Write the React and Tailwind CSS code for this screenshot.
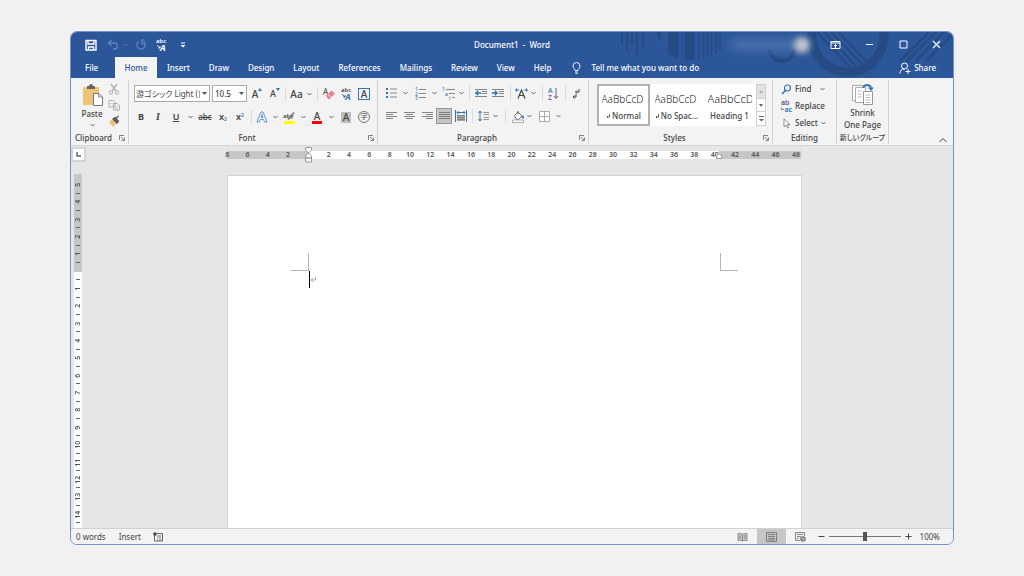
import React, { useState } from 'react';
import clsx from 'clsx';

const tabs = ['Insert', 'Draw', 'Design', 'Layout', 'References', 'Mailings', 'Review', 'View', 'Help'];

const rulerMarks = [8, 6, 4, 2, '', 2, 4, 6, 8, 10, 12, 14, 16, 18, 20, 22, 24, 26, 28, 30, 32, 34, 36, 38, 40, 42, 44, 46, 48];

const sideMarks = [5, 4, 3, 2, 1, '', 1, 2, 3, 4, 5, 6, 7, 8, 9, 10, 11, 12, 13, 14];

const Icon = ({ w = 12, h = 12, className, children }) => (
  <svg
    width={w}
    height={h}
    viewBox={`0 0 ${w} ${h}`}
    fill="none"
    stroke="currentColor"
    className={clsx('shrink-0 overflow-visible', className)}
    aria-hidden="true"
  >
    {children}
  </svg>
);

const Chevron = ({ className }) => (
  <Icon w={5} h={4} className={className}>
    <path d="M.5 1l2 2 2-2" opacity=".8" />
  </Icon>
);

const Tool = ({ label, className, children }) => (
  <button type="button" aria-label={label} className={clsx('flex h-4 shrink-0 items-center justify-center', className)}>
    {children}
  </button>
);

const Sep = ({ className = 'w-1' }) => (
  <div className={clsx('flex shrink-0 justify-center', className)}>
    <div className="h-[14px] w-px bg-[#dcdcdc]" />
  </div>
);

const Launcher = ({ label }) => (
  <button type="button" aria-label={label} className="text-[#666]">
    <Icon w={6} h={6}>
      <path d="M.5 5V.5H5M2 2l3 3M5.500 2.500v3h-3" strokeWidth=".8" />
    </Icon>
  </button>
);

const Group = ({ name, launcher, className, children }) => (
  <section aria-label={name} className={clsx('flex h-[64px] shrink-0 flex-col border-r border-[#d2d2d2]', className)}>
    <div className="flex-1">{children}</div>
    <div className={clsx('flex h-3 items-center', launcher && 'pr-[3px]')}>
      <span className={clsx('flex-1 text-center whitespace-nowrap', launcher && 'pr-[3px]')}>{name}</span>
      {launcher && <Launcher label={`${name} settings`} />}
    </div>
  </section>
);

// "abc" over a slanted A, used in the title bar and in the font group
const PhoneticIcon = ({ letter }) => (
  <Icon w={14} h={14}>
    <text x="1" y="5" fontSize="6" fontWeight="600" fill="currentColor" stroke="none">abc</text>
    <text x="5" y="13" fontSize="9" fontStyle="italic" fontWeight="700" fill={letter} stroke="none">A</text>
    <path d="M2 7l3 3m0-2v2H3" strokeWidth=".8" />
  </Icon>
);

const Lines = ({ rows }) => (
  <Icon w={11} h={10} className="text-[#777]">
    {rows.map(([x1, x2], i) => (
      <path key={i} d={`M${x1} ${i * 2 + 1}.5H${x2}`} strokeWidth=".9" />
    ))}
  </Icon>
);

const Backdrop = () => (
  <svg width="339" height="46" viewBox="615 31 339 46" fill="none" stroke="#254a84" className="absolute top-0 right-0" aria-hidden="true">
    <path d="M623 31v12M628 31v18M633 31v13M638 31v24M644 31v15" strokeWidth="2" />
    <path d="M657 31h5v10z" fill="#254a84" stroke="none" />
    <path d="M669 31h10v27l-10-5zM686 31h9v28l-9 .5z" fill="#254a84" stroke="none" />
    <path d="M700 31v28M704.500 31v27M708.500 31v26M712.500 31v24M717 31v21M721 31v18" strokeWidth="1.500" />
    <path d="M771 48a12 12 0 0 0 24 0" strokeWidth="4" />
    <circle cx="849" cy="35" r="36" strokeWidth="9" />
    <path d="M818 31l33 35M825 31l32 34M832 31l31 32M839 31l29 30" strokeWidth="2" />
    <path d="M901 60l29-29M907 61l30-30M917 60l28-29M927 60l26-26" strokeWidth="2.500" />
  </svg>
);

const TitleBar = () => (
  <div className="relative grid h-[25px] grid-cols-[1fr_auto_1fr] items-center">
    <div className="flex items-center pl-[14px]">
      <button type="button" aria-label="Save">
        <Icon>
          <path d="M1 1.500h10v9.500H1zM3 1.500v3.500h6V1.500M3.500 11V8h5v3" strokeWidth="1.400" />
        </Icon>
      </button>
      <button type="button" aria-label="Undo" className="ml-[10px] flex items-center gap-1 text-[#5f83bd]">
        <Icon>
          <path d="M4.500 1L1.500 4l3 3M1.500 4h6a3 3 0 0 1 0 6H6" strokeWidth="1.300" />
        </Icon>
        <Chevron />
      </button>
      <button type="button" aria-label="Redo" className="ml-[7px] text-[#5f83bd]">
        <Icon>
          <path d="M4 2.200a4.200 4.200 0 1 0 5 .6M9.500 1H6.500M7 1v3.500h3.500" strokeWidth="1.300" />
        </Icon>
      </button>
      <button type="button" aria-label="Phonetic guide" className="ml-[8px]">
        <PhoneticIcon letter="#fff" />
      </button>
      <button type="button" aria-label="Customize toolbar" className="ml-[11px]">
        <Icon w={6} h={6}>
          <path d="M1 1h4" />
          <path d="M.5 3h5L3 5.500z" fill="currentColor" stroke="none" />
        </Icon>
      </button>
    </div>
    <h1 className="font-medium whitespace-pre">Document1  -  Word</h1>
    <div className="flex items-center justify-end pr-3">
      <div className="mr-[-6px] h-3 w-[70px] rounded-full bg-[#5c7fb8]/60 blur-[4px]" />
      <div className="mr-[20px] size-4 rounded-full bg-[#c3c7cc] blur-[3px]" />
      <button type="button" aria-label="Ribbon display options">
        <Icon w={11} h={10}>
          <path d="M1 1.500h9v7H1zM1 3h9M5.500 8V4.500M4 6l1.500-1.500L7 6" />
        </Icon>
      </button>
      <button type="button" aria-label="Minimize" className="ml-[24px]">
        <Icon w={9} h={9}><path d="M1 4.500h7" /></Icon>
      </button>
      <button type="button" aria-label="Maximize" className="ml-[25px]">
        <Icon w={9} h={9}><path d="M1 1h7v7H1z" /></Icon>
      </button>
      <button type="button" aria-label="Close" className="ml-[24px]">
        <Icon w={9} h={9}><path d="M1 1l7 7M8 1L1 8" strokeWidth="1.200" /></Icon>
      </button>
    </div>
  </div>
);

const TabBar = () => (
  <nav className="relative flex h-[21px] items-stretch font-medium">
    <a href="#file" className="flex w-[44px] items-center pl-[14px]">File</a>
    <a href="#home" className="flex w-[42px] items-center justify-center bg-[#f3f3f3] text-[#2b579a]">Home</a>
    <div className="flex items-center gap-[19px] pl-[10px]">
      {tabs.map((tab) => (
        <a key={tab} href={`#${tab.toLowerCase()}`}>{tab}</a>
      ))}
    </div>
    <button type="button" className="ml-[21px] flex items-center gap-[10px]">
      <Icon w={9} h={12}>
        <path d="M3 8.500C3 7 1 6 1 4a3.500 3.500 0 0 1 7 0c0 2-2 3-2 4.500zM3 10h3M3.500 11.500h2" strokeWidth=".9" />
      </Icon>
      Tell me what you want to do
    </button>
    <button type="button" className="mr-[17px] ml-auto flex items-center gap-[3px]">
      <Icon>
        <circle cx="5.500" cy="4" r="3" />
        <path d="M1 11.500c0-3 1.500-4.500 4.500-4.500M9 7v5M6.500 9.500h5" />
      </Icon>
      Share
    </button>
  </nav>
);

const ClipboardGroup = () => (
  <Group name="Clipboard" launcher className="w-[58px]">
    <div className="flex pt-[3px] pl-[9px]">
      <button type="button" className="flex w-[24px] flex-col items-center">
        <Icon w={22} h={24}>
          <path d="M2 4h16v18H2z" fill="#edc377" stroke="none" />
          <path d="M6 3h2a2 2 0 0 1 4 0h2v3H6z" fill="#666" stroke="none" />
          <path d="M12.500 10.500h5l4 3.500v8.500h-9z" fill="#fff" stroke="#777" />
          <path d="M17.500 10.500V14h4" stroke="#777" strokeWidth=".8" />
        </Icon>
        <span className="mt-[1px] leading-[11px]">Paste</span>
        <Chevron className="mt-1" />
      </button>
      <div className="ml-[4px] flex flex-col items-center gap-1 text-[#b0b0b0]">
        <button type="button" aria-label="Cut">
          <Icon w={12} h={12}>
            <path d="M3 1l5 7M9 1L4 8" strokeWidth="1.300" />
            <circle cx="3" cy="9.500" r="1.700" />
            <circle cx="9" cy="9.500" r="1.700" />
          </Icon>
        </button>
        <button type="button" aria-label="Copy">
          <Icon w={12} h={12}>
            <path d="M1 1.500h4l2 2V8H1zM5.500 4.500h4l2 2V11h-6z" fill="#f3f3f3" />
            <path d="M2.500 4.500h2M7 7.500h3M7 9.500h3" strokeWidth=".7" />
          </Icon>
        </button>
        <button type="button" aria-label="Format painter">
          <Icon w={12} h={12}>
            <path d="M1 7l4-3 4 4-4 4z" fill="#edc377" stroke="none" />
            <path d="M5 4l2-1.500 3.500 3.500L9 8zM8 3.500L10.500 1" fill="#666" stroke="#555" strokeWidth="1.200" />
          </Icon>
        </button>
      </div>
    </div>
  </Group>
);

const FontGroup = () => (
  <Group name="Font" launcher className="w-[249px]">
    <div className="flex items-center pt-[5px] pl-[5px]">
      <div className="mr-[2px] grid w-[76px] items-center">
        <select
          aria-label="Font name"
          className="col-start-1 row-start-1 h-[17px] w-full appearance-none rounded-none border border-[#ababab] bg-white pr-[9px] pl-px font-normal [font-feature-settings:'palt']"
        >
          <option>游ゴシック Light (日本語)</option>
        </select>
        <Icon w={5} h={3} className="pointer-events-none col-start-1 row-start-1 mr-[3px] justify-self-end">
          <path d="M0 0h5L2.500 3z" fill="#555" stroke="none" />
        </Icon>
      </div>
      <div className="grid w-[35px] items-center">
        <select aria-label="Font size" className="col-start-1 row-start-1 h-[17px] w-full appearance-none rounded-none border border-[#ababab] bg-white pl-[2px]">
          <option>10.5</option>
        </select>
        <Icon w={5} h={3} className="pointer-events-none col-start-1 row-start-1 mr-[3px] justify-self-end">
          <path d="M0 0h5L2.500 3z" fill="#555" stroke="none" />
        </Icon>
      </div>
      <Tool label="Grow font" className="w-[20px] text-[10px]">
        A<Icon w={4} h={3} className="mb-2"><path d="M0 3h4L2 0z" fill="#2e75b6" stroke="none" /></Icon>
      </Tool>
      <Tool label="Shrink font" className="w-[16px] text-[9px]">
        A<Icon w={4} h={3} className="mb-2"><path d="M0 0h4L2 3z" fill="#2e75b6" stroke="none" /></Icon>
      </Tool>
      <Sep />
      <Tool label="Change case" className="w-[28px] gap-1 text-[10px]">Aa<Chevron /></Tool>
      <Sep />
      <Tool label="Clear formatting" className="w-[20px]">
        <Icon w={12} h={13}>
          <text x="0" y="8" fontSize="8" fill="#555" stroke="none">A</text>
          <path d="M3 8.500L8.500 3.500l3.500 3L6.500 12H5z" fill="#e8808f" stroke="none" />
          <path d="M5 7l3 3" stroke="#fff" strokeWidth=".8" />
        </Icon>
      </Tool>
      <Tool label="Phonetic guide" className="w-[16px]"><PhoneticIcon letter="#2e75b6" /></Tool>
      <Tool label="Character border" className="w-[18px]">
        <span className="flex h-[12px] w-[12px] items-center justify-center border border-[#2e75b6] text-[10px]">A</span>
      </Tool>
    </div>
    <div className="flex items-center pt-[7px] pl-1">
      <Tool label="Bold" className="w-[16px] text-[9px] font-bold">B</Tool>
      <Tool label="Italic" className="w-[18px] font-['Liberation_Serif',serif] text-[10px] font-bold italic">I</Tool>
      <Tool label="Underline" className="w-[18px] text-[9px] font-semibold underline">U</Tool>
      <Tool label="Underline style" className="w-[10px]"><Chevron /></Tool>
      <Tool label="Strikethrough" className="w-[20px] line-through">abc</Tool>
      <Tool label="Subscript" className="w-[16px] text-[9px] font-semibold">
        x<span className="mt-1 text-[5px] text-[#2e75b6]">2</span>
      </Tool>
      <Tool label="Superscript" className="w-[18px] text-[9px] font-semibold">
        x<span className="mb-1 text-[5px] text-[#2e75b6]">2</span>
      </Tool>
      <Sep />
      <Tool label="Text effects" className="w-[18px]">
        <Icon w={12} h={12}>
          <path d="M1 11L5 1h2l4 10H8.500L7.700 8.500H4.300L3.500 11zM5 6.500h2L6 3.500z" stroke="#4a8ad0" fill="#fff" strokeWidth=".9" />
        </Icon>
      </Tool>
      <Tool label="Text effects menu" className="w-2"><Chevron /></Tool>
      <Tool label="Highlight" className="w-[20px]">
        <Icon w={13} h={13}>
          <text x="0" y="7" fontSize="6" fontWeight="600" fill="#444" stroke="none">aby</text>
          <path d="M5 8.500L11 1.500" stroke="#777" strokeWidth="1.500" />
          <path d="M1 10h11v3H1z" fill="#ff0" stroke="none" />
        </Icon>
      </Tool>
      <Tool label="Highlight color" className="w-2"><Chevron /></Tool>
      <Tool label="Font color" className="w-[20px]">
        <span className="border-b-[3px] border-[#f00] px-[2px] text-[10px] leading-[10px]">A</span>
      </Tool>
      <Tool label="Font color menu" className="w-2"><Chevron /></Tool>
      <Tool label="Character shading" className="w-[22px]">
        <span className="flex h-[11px] w-[10px] items-center justify-center bg-[#bdbdbd] text-[10px]">A</span>
      </Tool>
      <Tool label="Enclose characters" className="w-[14px]">
        <span className="flex size-3 items-center justify-center rounded-full border border-[#777] text-[7px] font-normal">字</span>
      </Tool>
    </div>
  </Group>
);

const ParagraphGroup = () => (
  <Group name="Paragraph" launcher className="w-[211px]">
    <div className="flex items-center pt-[5px] pl-1">
      <Tool label="Bullets" className="w-[18px]">
        <Icon w={11} h={12}>
          <path d="M0 2h2M0 6h2M0 10h2" stroke="#2e75b6" strokeWidth="2" />
          <path d="M4 2h7M4 6h7M4 10h7" stroke="#888" />
        </Icon>
      </Tool>
      <Tool label="Bullet library" className="w-[10px]"><Chevron /></Tool>
      <Tool label="Numbering" className="w-[20px]">
        <Icon w={11} h={13}>
          <g fontSize="5" fill="#2e75b6" stroke="none">
            <text x="0" y="4">1</text>
            <text x="0" y="8.500">2</text>
            <text x="0" y="13">3</text>
          </g>
          <path d="M4 2.500h7M4 6.500h7M4 10.500h7" stroke="#888" />
        </Icon>
      </Tool>
      <Tool label="Numbering library" className="w-2"><Chevron /></Tool>
      <Tool label="Multilevel list" className="w-[20px]">
        <Icon w={13} h={13}>
          <g fontSize="5" fill="#2e75b6" stroke="none">
            <text x="0" y="4">1</text>
            <text x="3" y="8.500">a</text>
            <text x="7" y="13">i</text>
          </g>
          <path d="M4 2.500h9M7 6.500h6M10 10.500h3" stroke="#888" />
        </Icon>
      </Tool>
      <Tool label="List library" className="w-1.5"><Chevron /></Tool>
      <Sep className="w-[10px]" />
      <Tool label="Decrease indent" className="w-[14px]">
        <Icon w={12} h={10}>
          <path d="M0 1.500h12M7 3.500h5M7 5.500h5M0 8.500h12" stroke="#777" strokeWidth=".9" />
          <path d="M0 5l3-2.500V4.500h3v1H3v2z" fill="#2e75b6" stroke="#2e75b6" strokeWidth=".5" />
        </Icon>
      </Tool>
      <Tool label="Increase indent" className="w-[20px]">
        <Icon w={12} h={10}>
          <path d="M0 1.500h12M7 3.500h5M7 5.500h5M0 8.500h12" stroke="#777" strokeWidth=".9" />
          <path d="M6 5L3 2.500V4.500H0v1h3v2z" fill="#2e75b6" stroke="#2e75b6" strokeWidth=".5" />
        </Icon>
      </Tool>
      <Sep />
      <Tool label="Asian layout" className="w-[18px]">
        <Icon w={13} h={12}>
          <path d="M3 11.500L6.500 3 10 11.500M4.300 8.500h4.400" strokeWidth="1.200" />
          <path d="M0 3l2-2v1.500h2v1H2V5zM13 3l-2-2v1.500H9v1h2V5z" fill="#2e75b6" stroke="none" />
        </Icon>
      </Tool>
      <Tool label="Asian layout menu" className="w-1.5"><Chevron /></Tool>
      <Sep className="w-3" />
      <Tool label="Sort" className="w-[10px]">
        <Icon w={11} h={13}>
          <text x="0" y="6" fontSize="7" fill="#2e75b6" stroke="none">A</text>
          <text x="0" y="13" fontSize="7" fill="#8a4fb0" stroke="none">Z</text>
          <path d="M8 1v10M6 9l2 2.500L10 9" stroke="#666" />
        </Icon>
      </Tool>
      <Sep className="w-[14px]" />
      <Tool label="Show marks" className="w-2">
        <Icon w={8} h={11}>
          <path d="M7 1v3H3.500M5 2.500L3.500 4 5 5.500M4 6v3H1M2.500 7.500L1 9l1.500 1.500" />
        </Icon>
      </Tool>
    </div>
    <div className="flex items-center pt-[7px] pl-1">
      <Tool label="Align left" className="w-[18px]"><Lines rows={[[0, 11], [0, 7], [0, 11], [0, 7]]} /></Tool>
      <Tool label="Center" className="w-[18px]"><Lines rows={[[0, 11], [2, 9], [0, 11], [2, 9]]} /></Tool>
      <Tool label="Align right" className="w-[18px]"><Lines rows={[[0, 11], [4, 11], [0, 11], [4, 11]]} /></Tool>
      <Tool label="Justify" className="w-4 border border-[#9a9a9a] bg-[#c5c5c5]">
        <Lines rows={[[0, 11], [0, 11], [0, 11], [0, 11]]} />
      </Tool>
      <Tool label="Distribute" className="w-[18px]">
        <Icon w={12} h={12}>
          <path d="M.5 0v12M11.500 0v12M2 2.500h8M3.500 1L2 2.500 3.500 4M8.500 1L10 2.500 8.500 4" stroke="#2e75b6" />
          <path d="M2 5h8v6H2z" fill="#a8a8a8" stroke="none" />
          <path d="M2 5.500h8M2 7.500h8M2 9.500h8" stroke="#777" strokeWidth=".8" />
        </Icon>
      </Tool>
      <Sep />
      <Tool label="Line spacing" className="w-[18px]">
        <Icon w={11} h={12}>
          <path d="M2 1v10M.5 3L2 1l1.500 2M.5 9L2 11l1.500-2" stroke="#2e75b6" />
          <path d="M5.500 2.500H11M5.500 4.500H11M5.500 7.500H11M5.500 9.500H11" stroke="#888" strokeWidth=".9" />
        </Icon>
      </Tool>
      <Tool label="Line spacing menu" className="w-1.5"><Chevron /></Tool>
      <Sep className="w-[14px]" />
      <Tool label="Shading" className="w-3">
        <Icon w={13} h={13}>
          <path d="M2.500 5.500L6 2l4 4-3.500 3.500h-2zM6 4V1" stroke="#666" fill="#fff" />
          <path d="M11 5c1.500 2 1.500 3.500 0 3.500S9.500 7 11 5z" fill="#2e75b6" stroke="none" />
          <path d="M.5 10h11v2.500H.5z" stroke="#999" strokeWidth=".8" fill="#fff" />
        </Icon>
      </Tool>
      <Tool label="Shading color" className="w-[10px]"><Chevron /></Tool>
      <Tool label="Borders" className="w-[20px]">
        <Icon w={11} h={11}>
          <path d="M.5.5h10v10H.5zM5.500.5v10M.5 5.500h10" stroke="#999" fill="#fff" strokeWidth=".8" />
        </Icon>
      </Tool>
      <Tool label="Borders menu" className="w-2"><Chevron /></Tool>
    </div>
  </Group>
);

const StyleCard = ({ name, active, mark, big }) => (
  <button
    type="button"
    className={clsx(
      'flex w-[53px] flex-col items-center justify-between overflow-hidden border-2 px-[3px] pt-[5px] pb-[2px]',
      active ? 'border-[#b1b1ad]' : 'border-transparent'
    )}
  >
    <span
      className={clsx(
        'w-[44px] overflow-hidden text-left leading-4 font-light whitespace-nowrap text-[#222]',
        big ? 'text-[11px]' : 'text-[10px]'
      )}
    >
      AaBbCcD
    </span>
    <span className="flex items-center gap-[2px] whitespace-nowrap">
      {mark && (
        <Icon w={4} h={5}>
          <path d="M3.500 0v3H1M2 2L1 3l1 1" strokeWidth=".8" />
        </Icon>
      )}
      {name}
    </span>
  </button>
);

const StylesGroup = () => (
  <Group name="Styles" launcher className="w-[184px]">
    <div className="flex pt-[4px] pl-2">
      <div className="flex h-[42px] bg-white">
        <StyleCard name="Normal" active mark />
        <StyleCard name="No Spac..." mark />
        <StyleCard name="Heading 1" big />
        <div className="flex w-[10px] flex-col divide-y divide-[#d0d0d0] border border-[#d0d0d0] text-[#666]">
          <button type="button" aria-label="Previous styles" className="flex flex-1 items-center justify-center bg-[#e1e1e1] text-[#aaa]">
            <Icon w={4} h={3}><path d="M0 3h4L2 0z" fill="currentColor" stroke="none" /></Icon>
          </button>
          <button type="button" aria-label="Next styles" className="flex flex-1 items-center justify-center">
            <Icon w={4} h={3}><path d="M0 0h4L2 3z" fill="currentColor" stroke="none" /></Icon>
          </button>
          <button type="button" aria-label="All styles" className="flex flex-1 items-center justify-center">
            <Icon w={5} h={6}>
              <path d="M0 .5h5" />
              <path d="M0 3h5L2.500 5.500z" fill="currentColor" stroke="none" />
            </Icon>
          </button>
        </div>
      </div>
    </div>
  </Group>
);

const EditingGroup = () => (
  <Group name="Editing" className="w-[64px]">
    <div className="flex flex-col gap-[5px] pt-[3px] pl-2">
      <button type="button" className="flex h-3 items-center gap-[3px]">
        <Icon w={11} h={11}>
          <circle cx="6.500" cy="4" r="3" stroke="#2e75b6" strokeWidth="1.200" />
          <path d="M4.500 6.500L1 10" stroke="#2e75b6" strokeWidth="1.600" />
        </Icon>
        Find
        <Chevron className="ml-[6px]" />
      </button>
      <button type="button" className="flex h-3 items-center gap-[3px]">
        <Icon w={11} h={12}>
          <g fontSize="7" fontWeight="600" stroke="none">
            <text x="0" y="5" fill="#555">a<tspan fill="#8a4fb0">b</tspan></text>
            <text x="3.500" y="11.500" fill="#2e75b6">ac</text>
          </g>
          <path d="M.5 7.500v2H3" stroke="#2e75b6" strokeWidth=".8" />
        </Icon>
        Replace
      </button>
      <button type="button" className="flex h-3 items-center gap-[3px]">
        <Icon w={11} h={11}>
          <path d="M3 1v8l2-2 1.500 3 1.200-.6L6.500 6.500H9z" fill="#fff" stroke="#777" strokeWidth=".8" />
        </Icon>
        Select
        <Chevron />
      </button>
    </div>
  </Group>
);

const ShrinkGroup = () => (
  <Group name="新しいグループ" className="w-[52px] [&>div:last-child]:text-[7px] [&>div:last-child]:[font-feature-settings:'palt']">
    <button type="button" className="flex w-full flex-col items-center pt-[3px] leading-3">
      <Icon w={24} h={24}>
        <path d="M1.500 2.500h11v15h-11z" fill="#fff" stroke="#aaa" />
        <path d="M4.500 4.500h10v15h-10z" fill="#fff" stroke="#aaa" />
        <path d="M12.500 8.500h9v13h-9z" fill="#fff" stroke="#999" />
        <path d="M14.500 12h5M14.500 14.500h5M14.500 17h5M14.500 19.500h5M6.500 8h4M6.500 11h4M6.500 14h4" stroke="#aaa" strokeWidth=".8" />
        <path d="M12 4.500c2-3.500 6.500-3.500 8 0" stroke="#2e75b6" strokeWidth="2" />
        <path d="M17 4.500h6L20 8z" fill="#2e75b6" stroke="none" />
      </Icon>
      <span>Shrink</span>
      <span>One Page</span>
    </button>
  </Group>
);

const Ruler = () => (
  <div className="flex items-start pt-[1px]">
    <button type="button" aria-label="Tab stop" className="flex size-[15px] items-center justify-center border-2 border-[#d5d5d5] bg-white">
      <Icon w={5} h={5} className="text-[#666]"><path d="M1 0v4h4" strokeWidth="1.500" /></Icon>
    </button>
    <div className="flex flex-1 justify-center pr-[11px]">
      <div className="mt-[3px] grid w-[574px] grid-cols-1 items-center">
        <div className="col-start-1 row-start-1 flex h-2">
          <div className="w-[81px] bg-[#c6c6c6]" />
          <div className="flex-1 bg-white" />
          <div className="w-[82px] bg-[#c6c6c6]" />
        </div>
        <div className="col-start-1 row-start-1 -ml-[10px] flex w-[589px] text-[7px] leading-[8px] font-semibold text-[#555]">
          {rulerMarks.map((mark, i) => (
            <span key={i} className="flex-1 text-center">{mark}</span>
          ))}
        </div>
        <div className="col-start-1 row-start-1 -my-1 flex justify-between pr-[78px] pl-[77px] text-[#999]">
          <Icon w={9} h={17}>
            <path d="M1.500 1.500h6V4l-3 3-3-3zM1.500 12V10l3-3 3 3v2zM1.500 12h6v4h-6z" fill="#fff" />
          </Icon>
          <Icon w={8} h={17}>
            <path d="M1.500 12.500V10L4 7.500 6.500 10v2.500z" fill="#fff" />
          </Icon>
        </div>
      </div>
    </div>
  </div>
);

const SideRuler = () => (
  <div className="ml-[3px] grid w-2 grid-cols-1 text-[7px] leading-[8px] font-semibold text-[#555]">
    <div className="col-start-1 row-start-1 flex flex-col">
      <div className="h-[98px] bg-[#c6c6c6]" />
      <div className="flex-1 bg-white" />
    </div>
    <div className="col-start-1 row-start-1 flex flex-col pt-[6px] pb-px">
      {sideMarks.map((mark, i) => (
        <div key={i} className="flex min-h-0 flex-1 flex-col items-center">
          <span className="flex min-h-0 flex-1 rotate-180 items-center justify-center [writing-mode:vertical-rl]">{mark}</span>
          <span className="flex min-h-0 flex-1 items-center"><span className="h-px w-1 bg-[#666]" /></span>
        </div>
      ))}
    </div>
  </div>
);

const Page = () => (
  <div className="flex flex-1 justify-center pt-px pr-[7px]">
    <main aria-label="Document page" className="w-[575px] border border-b-0 border-[#d4d4d4] bg-white pt-[77px]">
      <div className="flex justify-between px-[63px]">
        <div className="size-[18px] border-r border-b border-[#b5b5b5]" />
        <div className="size-[18px] border-b border-l border-[#b5b5b5]" />
      </div>
      <div className="flex items-center pl-[81px]">
        <div className="h-[17px] w-px bg-black" />
        <Icon w={7} h={7} className="text-[#aaa]">
          <path d="M5.500 1v3H1.500M3 2L1 4l2 2" />
        </Icon>
      </div>
    </main>
  </div>
);

const StatusBar = () => {
  const [zoom, setZoom] = useState(100);

  return (
    <footer className="flex h-4 items-center border-t border-[#d0d0d0] bg-[#f3f3f3] pl-[5px]">
      <span>0 words</span>
      <span className="ml-[13px]">Insert</span>
      <button type="button" aria-label="Macros" className="ml-3">
        <Icon w={10} h={10}>
          <path d="M1.500 3v6h8V1.500H4" stroke="#666" />
          <circle cx="2" cy="2" r="1.800" fill="#444" stroke="none" />
          <path d="M4 4h4M4 6h1M6 6h2M4 8h1M6 8h2" stroke="#777" />
        </Icon>
      </button>
      <button type="button" aria-label="Read mode" className="mr-[9px] ml-auto">
        <Icon w={11} h={10}>
          <path d="M1 1.500h3.500l1 1 1-1H10v7H6.500l-1 1-1-1H1z" fill="#ccc" stroke="#888" strokeWidth=".9" />
          <path d="M5.500 2v7M2 4h2M2 6h2M7 4h2M7 6h2" stroke="#777" strokeWidth=".9" />
        </Icon>
      </button>
      <button type="button" aria-label="Print layout" className="flex h-[15px] w-[29px] items-center justify-center bg-[#c6c6c6]">
        <Icon w={11} h={10}>
          <path d="M.5.5h10v9H.5zM2 2.500h7M2 4.500h7M2 6.500h7M2 8h7" stroke="#777" strokeWidth=".9" />
        </Icon>
      </button>
      <button type="button" aria-label="Web layout" className="ml-[9px]">
        <Icon w={11} h={10}>
          <path d="M5 8.500H.5v-8h9V4M2 2.500h6M2 4.500h4M2 6.500h2" stroke="#777" strokeWidth=".9" />
          <circle cx="8" cy="7" r="2.800" fill="#777" stroke="none" />
          <path d="M6.500 6l2 1 1-1M8 9l.5-1.500" stroke="#fff" strokeWidth=".7" />
        </Icon>
      </button>
      <button type="button" aria-label="Zoom out" className="ml-3">
        <Icon w={7} h={7}><path d="M.5 3.500h6" /></Icon>
      </button>
      <input
        type="range"
        aria-label="Zoom"
        min="0"
        max="200"
        value={zoom}
        onChange={(e) => setZoom(Number(e.target.value))}
        className="mx-1 h-[9px] w-[72px] appearance-none bg-[linear-gradient(#777,#777)] bg-[length:100%_1px] bg-center bg-no-repeat [&::-webkit-slider-thumb]:h-[9px] [&::-webkit-slider-thumb]:w-1 [&::-webkit-slider-thumb]:appearance-none [&::-webkit-slider-thumb]:bg-[#555]"
      />
      <button type="button" aria-label="Zoom in">
        <Icon w={7} h={7}><path d="M.5 3.500h6M3.500.5v6" /></Icon>
      </button>
      <span className="mr-[13px] ml-2">{zoom}%</span>
    </footer>
  );
};

const App = () => (
  <div className="flex min-h-screen flex-col bg-[#f1f1f1] px-[70px] pt-[31px] pb-[31px] font-['Noto_Sans','Noto_Sans_CJK_JP',sans-serif] text-[8px] leading-[12px] text-[#444]">
    <div className="flex flex-1 flex-col overflow-hidden rounded-[7px] border border-[#6f93cb] bg-[#e6e6e6]">
      <header className="relative bg-[#2b579a] text-white">
        <Backdrop />
        <TitleBar />
        <TabBar />
      </header>
      <div className="flex h-[68px] items-start border-b border-[#d5d5d5] bg-[#f3f3f3] pt-[2px] font-medium">
        <ClipboardGroup />
        <FontGroup />
        <ParagraphGroup />
        <StylesGroup />
        <EditingGroup />
        <ShrinkGroup />
        <button type="button" aria-label="Collapse ribbon" className="mr-[6px] ml-auto self-end pb-[1px]">
          <Icon w={8} h={7}><path d="M.5 5L4 1.500 7.500 5" /></Icon>
        </button>
      </div>
      <Ruler />
      <div className="flex flex-1 pt-3">
        <SideRuler />
        <Page />
      </div>
      <StatusBar />
    </div>
  </div>
);

export default App;
